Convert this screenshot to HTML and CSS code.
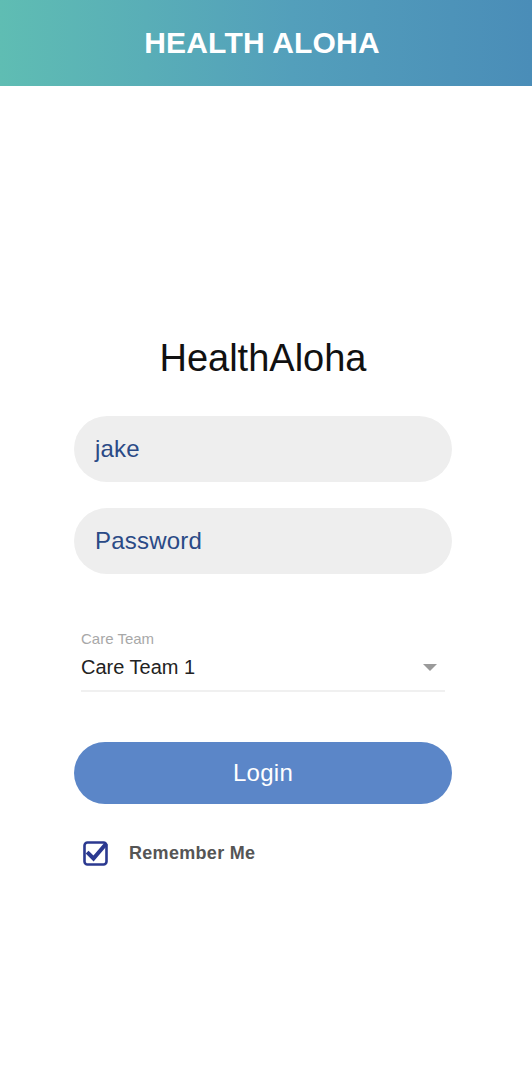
FILE: index.html
```html
<!DOCTYPE html>
<html>
<head>
<meta charset="utf-8">
<link rel="stylesheet" href="styles.css">
</head>
<body>
<header class="topbar">
  <h1 class="topbar-title">HEALTH ALOHA</h1>
</header>
<main class="login">
  <h2 class="brand">HealthAloha</h2>
  <div class="field"><span class="field-text">jake</span></div>
  <div class="field field-second"><span class="field-text">Password</span></div>
  <div class="select">
    <div class="select-label">Care Team</div>
    <div class="select-row">
      <span class="select-value">Care Team 1</span>
      <span class="select-arrow"></span>
    </div>
  </div>
  <button class="login-btn">Login</button>
  <label class="remember">
    <svg class="check" width="26" height="28" viewBox="0 0 26 28">
      <rect x="1.5" y="3.5" width="22" height="22" rx="3" fill="none" stroke="#2b3990" stroke-width="2.6"/>
      <path d="M5.5 14.5 L10.5 19.5 L22 6" fill="none" stroke="#2b3990" stroke-width="4" stroke-linecap="square"/>
    </svg>
    <span class="remember-text">Remember Me</span>
  </label>
</main>
</body>
</html>
```
FILE: styles.css
```css
* { box-sizing: border-box; }
body {
  margin: 0;
  background: #ffffff;
  font-family: "Liberation Sans", Arial, sans-serif;
}
.topbar {
  height: 86px;
  background: linear-gradient(90deg, #5fbdb3 0%, #539fbb 55%, #4a8db8 100%);
  display: flex;
  align-items: center;
  justify-content: center;
  padding-right: 8px;
}
.topbar-title {
  margin: 0;
  color: #ffffff;
  font-size: 30px;
  font-weight: bold;
  line-height: 36px;
  letter-spacing: 0.2px;
}
.login {
  width: 378px;
  margin-left: 74px;
  padding-top: 250px;
  display: flex;
  flex-direction: column;
}
.brand {
  margin: 0;
  text-align: center;
  font-weight: normal;
  font-size: 38px;
  line-height: 44px;
  color: #111111;
}
.field {
  margin-top: 36px;
  height: 66px;
  border-radius: 33px;
  background: #eeeeee;
  display: flex;
  align-items: center;
  padding-left: 21px;
}
.field-second { margin-top: 26px; }
.field-text {
  font-size: 24px;
  letter-spacing: 0.2px;
  color: #2a4a86;
}
.select {
  margin: 57px 7px 0 7px;
  border-bottom: 2px solid #f0f0f0;
  padding-bottom: 11px;
}
.select-label {
  font-size: 15px;
  line-height: 16px;
  color: #a8a8a8;
}
.select-row {
  display: flex;
  align-items: center;
  justify-content: space-between;
  margin-top: 8px;
  padding-right: 8px;
}
.select-value {
  font-size: 20px;
  line-height: 24px;
  color: #222222;
}
.select-arrow {
  width: 0;
  height: 0;
  border-left: 7px solid transparent;
  border-right: 7px solid transparent;
  border-top: 7px solid #9a9a9a;
}
.login-btn {
  margin-top: 50px;
  height: 62px;
  border: none;
  border-radius: 31px;
  background: #5b86c8;
  color: #ffffff;
  font-family: "Liberation Sans", Arial, sans-serif;
  font-size: 24px;
  letter-spacing: 0.3px;
  padding: 0;
}
.remember {
  margin-top: 35px;
  margin-left: 9px;
  display: flex;
  align-items: center;
  gap: 20px;
}
.remember-text {
  font-size: 18px;
  font-weight: bold;
  color: #555555;
  letter-spacing: 0.3px;
}
```
